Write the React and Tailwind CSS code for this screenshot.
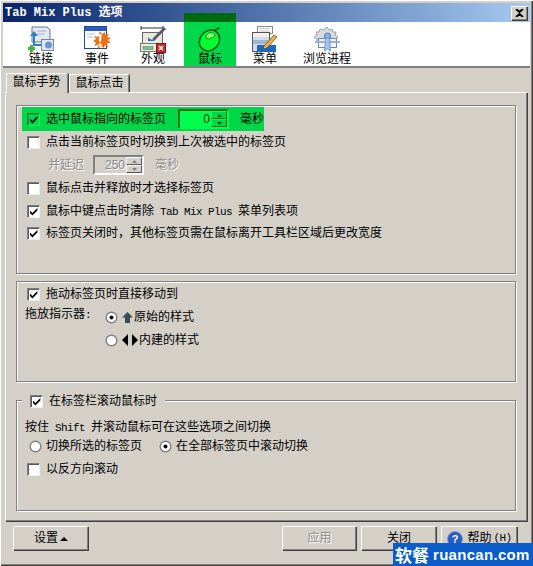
const CJK = "font-['Liberation_Mono','Noto_Sans_CJK_SC',monospace]";
// ascii runs in the reference advance 6px per char
const LATIN = "text-[11px] tracking-[-0.6px]";

function CheckMark({ color = "#000" }) {
  return (
    <svg className="h-[13px] w-[13px]" viewBox="0 0 13 13">
      <path d="M3 5.500v2.600l2.400 2.400 5-5V2.900l-5 5z" fill={color} />
    </svg>
  );
}

function Checkbox({ checked, green }) {
  return (
    <span
      className={`flex h-[13px] w-[13px] shrink-0 border-t border-l border-b border-r ${
        green
          ? "border-t-[#007a2c] border-l-[#007a2c] border-b-[#00ff4c] border-r-[#00ff4c] bg-[#00d84a] shadow-[inset_1px_1px_0_#00a838]"
          : "border-t-[#808080] border-l-[#808080] border-b-[#f0eeea] border-r-[#f0eeea] bg-white shadow-[inset_1px_1px_0_#5c5a56]"
      }`}
    >
      {checked && (
        <span className="-m-px">
          <CheckMark />
        </span>
      )}
    </span>
  );
}

function Radio({ checked }) {
  return (
    <svg className="h-[13px] w-[13px] shrink-0" viewBox="0 0 13 13">
      <circle cx="6.500" cy="6.500" r="6" fill="#808080" />
      <path d="M12.200 4.600A6 6 0 0 1 2.200 10.800 6 6 0 0 0 12.200 4.600z" fill="#fff" />
      <circle cx="6.500" cy="6.500" r="4.600" fill="#fff" />
      {checked && <circle cx="6.500" cy="6.500" r="2" fill="#000" />}
    </svg>
  );
}

function CheckRow({ checked, children, className = "" }) {
  return (
    <div className={`flex h-[14px] items-center ${className}`}>
      <Checkbox checked={checked} />
      <span className="mt-[2px] ml-[6px] whitespace-nowrap">{children}</span>
    </div>
  );
}

function Spinner({ value, green }) {
  const wrap = green
    ? "bg-[#00ff4c] border-t-[#00701f] border-l-[#00701f] border-b-[#00ff4c] border-r-[#00ff4c] text-[#003010]"
    : "bg-[#d4d0c8] border-t-[#808080] border-l-[#808080] border-b-white border-r-white text-[#8a8a8a]";
  const btn = green ? "bg-[#00d84a]" : "bg-[#d4d0c8]";
  const arrow = green ? "#004a14" : "#808080";
  return (
    <div className={`flex h-[20px] w-[51px] items-center justify-end border-2 ${wrap}`}>
      <span className="pr-px text-[12px] font-['Liberation_Sans',sans-serif] leading-none">{value}</span>
      <div className="flex h-full w-[16px] shrink-0 flex-col">
        {[0, 1].map((i) => (
          <div
            key={i}
            className={`flex h-[8px] flex-1 items-center justify-center border-t border-l border-b border-r ${btn} ${
              green
                ? "border-t-[#00ff4c] border-l-[#00ff4c] border-b-[#00701f] border-r-[#00701f]"
                : "border-t-white border-l-white border-b-[#555] border-r-[#555]"
            }`}
          >
            <svg className="h-[3px] w-[5px]" viewBox="0 0 5 3">
              <path d={i === 0 ? "M2.500 0 5 3H0z" : "M0 0h5L2.500 3z"} fill={arrow} />
            </svg>
          </div>
        ))}
      </div>
    </div>
  );
}

function LinkIcon() {
  return (
    <svg className="h-[27px] w-[27px]" viewBox="0 0 27 27">
      <path d="M4 1h15l3 3v12H4z" fill="#e2e8ee" stroke="#5d7d9a" />
      <path d="M9 5h9M9 8h7" stroke="#9fb2c4" />
      <path d="M6 9v10h8" fill="none" stroke="#2f7fc0" strokeWidth="2" />
      <path d="M6 5 2 10h8z" fill="#2f7fc0" />
      <rect x="13.500" y="13.500" width="12" height="11" fill="#dfe6ee" stroke="#7088a0" />
      <circle cx="20.500" cy="19" r="3.500" fill="#6e97cf" />
      <path d="M3.500 19v7M0 22.500h7" stroke="#3fb53f" strokeWidth="3" />
    </svg>
  );
}

function EventIcon() {
  return (
    <svg className="h-[27px] w-[27px]" viewBox="0 0 27 27">
      <rect x="0.500" y="0.500" width="22" height="22" fill="#fff" stroke="#1b4aa0" />
      <rect x="1" y="1" width="21" height="4" fill="#2a5cc0" />
      <path d="M3 8h8M3 11h6" stroke="#a8c0e4" />
      <path
        d="M16 5l2 3 3-2 0 3 4-1-2 3 4 1-3 2 3 3-4 0 1 4-3-2-1 3-3-2-3 3 0-4-4 1 2-3-3-2 3-2-2-3 4 1z"
        fill="#f07010"
      />
      <path d="M14.500 8h3.200l-.7 8h-1.800z" fill="#fff" />
      <circle cx="16" cy="19" r="1.700" fill="#fff" />
    </svg>
  );
}

function LookIcon() {
  return (
    <svg className="h-[27px] w-[27px]" viewBox="0 0 27 27">
      <path d="M1 2h22M1 0v4M23 0v4" stroke="#333" fill="none" />
      <rect x="2.500" y="6.500" width="20" height="11" fill="#e8e8dc" stroke="#666" />
      <rect x="0.500" y="17.500" width="24" height="8" fill="#ecece2" stroke="#777" />
      <rect x="3" y="20.500" width="10" height="3" fill="#7fbf8f" stroke="#3d7d4d" strokeWidth=".5" />
      <path d="M26 3 15 14l-3 1 1-3L24 1z" fill="#5a5a6a" />
      <path d="M8 11c3 4 7 3 8 2l-2 2H8z" fill="#2b6dc0" />
      <rect x="16.500" y="17.500" width="9" height="9" fill="#cf2a2a" stroke="#8a1010" />
      <path d="M19 20l4 4M23 20l-4 4" stroke="#fff" strokeWidth="1.500" />
    </svg>
  );
}

function MouseIcon() {
  return (
    <svg className="h-[27px] w-[27px]" viewBox="0 0 27 27">
      <path d="M18 5c1-2 3-3 5-3" fill="none" stroke="#006a1c" strokeWidth="2" />
      <ellipse cx="12.500" cy="14.500" rx="9.500" ry="11" transform="rotate(40 12.500 14.500)" fill="#00ff30" stroke="#005a14" strokeWidth="1.500" />
      <path d="M9 9c3-3 8-3 9 0-1 3-7 5-9 3z" fill="#8cff6a" stroke="#00901f" />
    </svg>
  );
}

function MenuIcon() {
  return (
    <svg className="h-[27px] w-[27px]" viewBox="0 0 27 27">
      <rect x="5.500" y="0.500" width="15" height="7" fill="#fff" stroke="#8a8a8a" />
      <path d="M7 2.500h11M7 5h11" stroke="#c8c8c8" />
      <rect x="0.500" y="6.500" width="17" height="19" fill="#cfdcec" stroke="#555" />
      <rect x="1" y="7" width="16" height="4" fill="#f0f0f0" />
      <rect x="1" y="14" width="16" height="4" fill="#9db6d2" />
      <rect x="5" y="19" width="19" height="7" fill="#1f66c0" />
      <path d="M12 20 22 9l3 2-10 11-4 1z" fill="#f0b048" stroke="#5a3a10" strokeWidth=".7" />
    </svg>
  );
}

function ProcessIcon() {
  return (
    <svg className="h-[27px] w-[27px]" viewBox="0 0 27 27">
      <path
        d="M13 1l2 3 3-1 1 3 3 0-1 3 3 2-3 2 0 3-18 0 0-3-3-2 3-2-1-3 3 0 1-3 3 1z"
        fill="#d8dce2"
        stroke="#9aa2ae"
      />
      <rect x="4.500" y="12.500" width="18" height="9" fill="#f2f2ee" stroke="#6b87a8" />
      <path d="M1 16h25" stroke="#9ab0cc" strokeWidth="2" />
      <circle cx="13.500" cy="10" r="3" fill="#8ab8e8" stroke="#4a78b0" />
      <path d="M11.500 12h4l1 13-3-2-3 2z" fill="#9cc4ec" stroke="#5a88bc" strokeWidth=".7" />
    </svg>
  );
}

const TOOLS = [
  { label: "链接", Icon: LinkIcon, w: "w-[56px]" },
  { label: "事件", Icon: EventIcon, w: "w-[56px]" },
  { label: "外观", Icon: LookIcon, w: "w-[56px]" },
  { label: "鼠标", Icon: MouseIcon, w: "w-[52px] ml-[3px]", active: true },
  { label: "菜单", Icon: MenuIcon, w: "w-[56px] ml-px" },
  { label: "浏览进程", Icon: ProcessIcon, w: "w-[68px]" },
];

function Button({ children, disabled, className = "" }) {
  return (
    <div
      className={`flex h-[24px] items-center justify-center border-t border-l border-t-white border-l-white shadow-[inset_-1px_-1px_0_#808080,1px_1px_0_#404040] ${
        disabled ? "text-[#8f8c86] [text-shadow:1px_1px_0_#fff]" : "text-black"
      } ${className}`}
    >
      {children}
    </div>
  );
}

export default function App() {
  return (
    <div className={`relative flex h-[566px] w-[533px] flex-col overflow-hidden bg-[#d4d0c8] p-[3px] text-[12px] leading-none text-black shadow-[inset_1px_1px_0_#fff,inset_-1px_-1px_0_#404040,inset_-2px_-2px_0_#808080] ${CJK}`}>
      {/* title bar */}
      <div className="flex h-[19px] shrink-0 items-center justify-between bg-gradient-to-r from-[#0a246a] to-[#a6caf0] pr-[3px] pl-[2px]">
        <span className="pt-px text-[12px] font-bold whitespace-nowrap text-white">Tab Mix Plus 选项</span>
        <div className="flex h-[14px] w-[16px] items-center justify-center border-t border-l border-t-white border-l-white bg-[#d4d0c8] shadow-[inset_-1px_-1px_0_#808080,1px_1px_0_#404040]">
          <svg className="h-[8px] w-[9px]" viewBox="0 0 9 8">
            <path d="M1 0l3.500 3L8 0M1 8l3.500-3L8 8" fill="none" stroke="#000" strokeWidth="2" />
          </svg>
        </div>
      </div>

      {/* toolbar */}
      <div className="flex h-[46px] shrink-0 border-b-2 border-b-[#808080] bg-white pl-[10px]">
        {TOOLS.map(({ label, Icon, w, active }) => (
          <div
            key={label}
            className={`relative flex flex-col items-center pt-[4px] ${w} ${active ? "bg-[#00d84a]" : ""}`}
          >
            {active && <div className="absolute -top-[9px] left-0 h-[9px] w-full bg-[#006a10]" />}
            <Icon />
            <span className="mt-[1px] text-[12px] leading-[12px] whitespace-nowrap">{label}</span>
          </div>
        ))}
      </div>

      {/* tabs */}
      <div className="mt-[4px] flex h-[20px] shrink-0 items-end pl-[3px]">
        <div className="z-10 -mb-px flex h-[20px] w-[62px] items-center justify-center rounded-t-[2px] border-t border-l border-t-white border-l-white bg-[#d4d0c8] pr-[2px] pb-px shadow-[inset_-1px_0_0_#808080,1px_0_0_#404040]">
          鼠标手势
        </div>
        <div className="ml-px flex h-[18px] w-[60px] items-center justify-center rounded-t-[2px] border-t border-l border-t-white border-l-white shadow-[inset_-1px_0_0_#808080,1px_0_0_#404040]">
          鼠标点击
        </div>
      </div>

      {/* tab panel */}
      <div className="mr-[3px] ml-[2px] flex h-[429px] shrink-0 flex-col border-t border-l border-t-white border-l-white pt-[12px] pl-[10px] shadow-[inset_-1px_-1px_0_#808080,1px_1px_0_#404040]">
        <div className="h-[169px] w-[500px] shrink-0 border border-[#808080] shadow-[inset_1px_1px_0_#fff,1px_1px_0_#fff]">
          <div className="mt-[1px] ml-[5px] flex h-[24px] w-[242px] items-center bg-[#00d84a] pl-[5px]">
            <Checkbox checked green />
            <span className="mt-[2px] ml-[6px] whitespace-nowrap">选中鼠标指向的标签页</span>
            <span className="ml-[12px]"><Spinner value="0" green /></span>
            <span className="mt-[2px] ml-[11px] whitespace-nowrap">毫秒</span>
          </div>
          <div className="flex flex-col pl-[10px]">
            <CheckRow className="mt-[4px]">点击当前标签页时切换到上次被选中的标签页</CheckRow>
            <div className="mt-[6px] flex h-[20px] items-center pl-[21px] text-[#8f8c86] [text-shadow:1px_1px_0_#fff]">
              <span className="mt-[2px]">并延迟</span>
              <span className="ml-[9px]"><Spinner value="250" /></span>
              <span className="mt-[2px] ml-[11px]">毫秒</span>
            </div>
            <CheckRow className="mt-[6px]">鼠标点击并释放时才选择标签页</CheckRow>
            <CheckRow checked className="mt-[9px]">
              鼠标中键点击时清除<span className={LATIN}> Tab Mix Plus </span>菜单列表项
            </CheckRow>
            <CheckRow checked className="mt-[8px]">标签页关闭时，其他标签页需在鼠标离开工具栏区域后更改宽度</CheckRow>
          </div>
        </div>

        <div className="mt-[7px] h-[101px] w-[500px] shrink-0 border border-[#808080] pt-[5px] pl-[10px] shadow-[inset_1px_1px_0_#fff,1px_1px_0_#fff]">
          <CheckRow checked>拖动标签页时直接移动到</CheckRow>
          <div className="mt-[6px] flex">
            <span className="-ml-[2px] pt-[2px] whitespace-nowrap">拖放指示器<span className={LATIN}>:</span></span>
            <div className="ml-[14px] flex flex-col pt-[3px]">
              <div className="flex h-[14px] items-center">
                <Radio checked />
                <svg className="ml-[4px] h-[11px] w-[11px]" viewBox="0 0 11 11">
                  <path d="M5.500 0 11 5.500H8V11H3V5.500H0z" fill="#3c4a58" />
                </svg>
                <span className="mt-[2px] ml-[1px] whitespace-nowrap">原始的样式</span>
              </div>
              <div className="mt-[9px] flex h-[14px] items-center">
                <Radio />
                <svg className="ml-[4px] h-[12px] w-[16px]" viewBox="0 0 16 12">
                  <path d="M6 0v12L0 6zM10 0v12l6-6z" fill="#000" />
                </svg>
                <span className="mt-[2px] ml-[1px] whitespace-nowrap">内建的样式</span>
              </div>
            </div>
          </div>
        </div>

        <div className="relative mt-[18px] h-[111px] w-[500px] shrink-0 border border-[#808080] shadow-[inset_1px_1px_0_#fff,1px_1px_0_#fff]">
          <div className="absolute -top-[8px] left-[5px] flex h-[16px] items-center bg-[#d4d0c8] px-[8px]">
            <Checkbox checked />
            <span className="mt-[2px] ml-[6px] whitespace-nowrap">在标签栏滚动鼠标时</span>
          </div>
          <div className="flex flex-col pt-[21px] pl-[8px]">
            <span className="whitespace-nowrap">按住<span className={LATIN}> Shift </span>并滚动鼠标可在这些选项之间切换</span>
            <div className="mt-[5px] flex h-[14px] items-center pl-[4px]">
              <Radio />
              <span className="mt-[2px] ml-[4px] whitespace-nowrap">切换所选的标签页</span>
              <span className="ml-[17px]"><Radio checked /></span>
              <span className="mt-[2px] ml-[4px] whitespace-nowrap">在全部标签页中滚动切换</span>
            </div>
            <CheckRow className="mt-[9px] pl-[2px]">以反方向滚动</CheckRow>
          </div>
        </div>
      </div>

      {/* bottom buttons */}
      <div className="mt-[5px] flex h-[24px] shrink-0 pl-[10px]">
        <Button className="w-[75px]">
          设置
          <svg className="ml-[2px] h-[4px] w-[8px]" viewBox="0 0 8 4">
            <path d="M4 0l4 4H0z" fill="#000" />
          </svg>
        </Button>
        <Button disabled className="ml-[194px] w-[74px]">应用</Button>
        <Button className="ml-[5px] w-[75px]">关闭</Button>
        <Button className="ml-[5px] w-[76px]">
          <svg className="mr-[4px] h-[16px] w-[16px]" viewBox="0 0 16 16">
            <circle cx="8" cy="8" r="7.500" fill="#2a5cc0" stroke="#7f9fd8" />
            <text x="8" y="12" textAnchor="middle" fontSize="11" fontWeight="bold" fill="#fff" fontFamily="Liberation Sans">?</text>
          </svg>
          帮助<span className={`ml-[2px] ${LATIN}`}>(H)</span>
        </Button>
      </div>

      {/* watermark */}
      <div className="absolute right-0 bottom-0 flex h-[23px] w-[140px] items-center bg-[#0a5cc8] pl-[2px] text-white">
        <span className="text-[17px] font-bold whitespace-nowrap font-['Noto_Sans_CJK_SC',sans-serif]">软餐</span>
        <span className="ml-[4px] text-[15px] font-bold tracking-[0.3px] whitespace-nowrap font-['Liberation_Sans',sans-serif]">ruancan.com</span>
      </div>
    </div>
  );
}
